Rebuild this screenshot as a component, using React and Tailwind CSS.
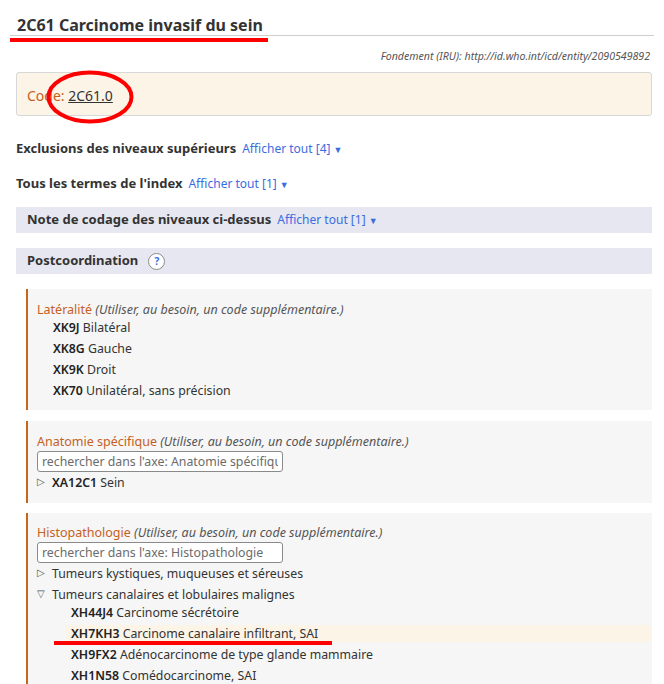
import React from 'react';

const Afficher = ({ n }) => (
    <span className="ml-[6px] text-[12px] font-normal text-[#3b6ce0]">
        Afficher tout [{n}] <span className="text-[9px]">▼</span>
    </span>
);

const Tri = ({ open }) => (
    <span className="inline-block w-[15px] text-[10px] leading-none text-[#555] align-[2px]">{open ? '▽' : '▷'}</span>
);

const Code = ({ code, label }) => (
    <>
        <span className="font-semibold text-[#222]">{code}</span> {label}
    </>
);

const Row = ({ children, className = '' }) => (
    <div className={`h-[21px] overflow-visible whitespace-nowrap text-[12.3px] leading-[21px] ${className}`}>{children}</div>
);

const AxisTitle = ({ name }) => (
    <div className="h-[14px] whitespace-nowrap text-[12.5px] leading-[14px]">
        <span className="text-[#c5601f]">{name}</span>{' '}
        <span className="italic text-[#555]">(Utiliser, au besoin, un code supplémentaire.)</span>
    </div>
);

const Search = ({ axis }) => (
    <input
        readOnly
        placeholder={`rechercher dans l'axe: ${axis}`}
        className="mt-[2px] block h-[21px] w-[246px] rounded-[3px] border border-[#8a8a8a] bg-white px-[4px] text-[12.3px] placeholder:text-[#6b6b6b] outline-none"
    />
);

export default function App() {
    return (
        <div className="relative h-[684px] overflow-hidden bg-white text-[#333]" style={{ fontFamily: '"Noto Sans", "Open Sans", sans-serif' }}>
            <div className="mx-[10px] h-[36px] border-b border-[#cfcfcf]">
                <h1 className="pl-[7px] pt-[14px] text-[16px] font-bold leading-[22px] text-[#333]">
                    2C61 Carcinome invasif du sein
                </h1>
            </div>

            <div className="pl-[16px] pr-[12px]">
                <div className="mt-[13px] h-[14px] pr-[2px] text-right text-[10.6px] italic leading-[14px] text-[#555]">
                    Fondement (IRU): http://id.who.int/icd/entity/2090549892
                </div>

                <div className="mt-[9px] h-[44px] rounded-[3px] border border-[#d8d8d8] bg-[#fdf4e8] pl-[10px] pt-[13px] text-[14px] leading-[20px]">
                    <span className="text-[#c5601f]">Code: </span>
                    <span className="text-[#333] underline">2C61.0</span>
                </div>

                <div className="mt-[23px] flex h-[20px] items-center whitespace-nowrap text-[13px] font-bold">
                    Exclusions des niveaux supérieurs <Afficher n={4} />
                </div>
                <div className="mt-[15px] flex h-[20px] items-center whitespace-nowrap text-[13px] font-bold">
                    Tous les termes de l'index <Afficher n={1} />
                </div>

                <div className="mt-[13px] flex h-[26px] items-center whitespace-nowrap bg-[#e6e7f0] pl-[11px] text-[13px] font-bold">
                    Note de codage des niveaux ci-dessus <Afficher n={1} />
                </div>
                <div className="mt-[15px] flex h-[26px] items-center bg-[#e6e7f0] pl-[11px] text-[13px] font-bold">
                    Postcoordination
                    <span className="ml-[10px] flex h-[17px] w-[17px] items-center justify-center rounded-full border border-[#8a8a8a] bg-white text-[10px] font-bold text-[#3b6ce0]">
                        ?
                    </span>
                </div>

                <div className="ml-[10px] mt-[15px] border-l-2 border-[#c8651c] bg-[#f6f6f6] pb-[9px] pl-[9px] pt-[14px]">
                    <AxisTitle name="Latéralité" />
                    <div className="pl-[16px]">
                        <Row><Code code="XK9J" label="Bilatéral" /></Row>
                        <Row><Code code="XK8G" label="Gauche" /></Row>
                        <Row><Code code="XK9K" label="Droit" /></Row>
                        <Row><Code code="XK70" label="Unilatéral, sans précision" /></Row>
                    </div>
                </div>

                <div className="ml-[10px] mt-[11px] border-l-2 border-[#c8651c] bg-[#f6f6f6] pb-[10px] pl-[9px] pt-[14px]">
                    <AxisTitle name="Anatomie spécifique" />
                    <Search axis="Anatomie spécifique" />
                    <Row className="h-[20px] leading-[20px]"><Tri /><Code code="XA12C1" label="Sein" /></Row>
                </div>

                <div className="ml-[10px] mt-[10px] border-l-2 border-[#c8651c] bg-[#f6f6f6] pb-[10px] pl-[9px] pt-[13px]">
                    <AxisTitle name="Histopathologie" />
                    <Search axis="Histopathologie" />
                    <Row><Tri />Tumeurs kystiques, muqueuses et séreuses</Row>
                    <Row><Tri open />Tumeurs canalaires et lobulaires malignes</Row>
                    <div className="-mt-[3px] pl-[34px]">
                        <Row><Code code="XH44J4" label="Carcinome sécrétoire" /></Row>
                        <Row className="pt-[2px]">
                            <div className="-ml-[5px] h-[17px] bg-[#fdf4e8] pl-[5px] leading-[17px]">
                                <Code code="XH7KH3" label="Carcinome canalaire infiltrant, SAI" />
                            </div>
                        </Row>
                        <Row><Code code="XH9FX2" label="Adénocarcinome de type glande mammaire" /></Row>
                        <Row><Code code="XH1N58" label="Comédocarcinome, SAI" /></Row>
                    </div>
                </div>
            </div>

            {/* annotations */}
            <div className="absolute left-[10px] top-[38px] h-[4px] w-[258px] bg-[#f00]" />
            <svg className="absolute left-[44px] top-[68px]" width="94" height="58" viewBox="0 0 94 58">
                <ellipse cx="46" cy="29" rx="41.5" ry="24.5" fill="none" stroke="#f00" strokeWidth="4" />
            </svg>
            <div className="absolute left-[54px] top-[641px] h-[4px] w-[278px] bg-[#f00]" />
        </div>
    );
}
